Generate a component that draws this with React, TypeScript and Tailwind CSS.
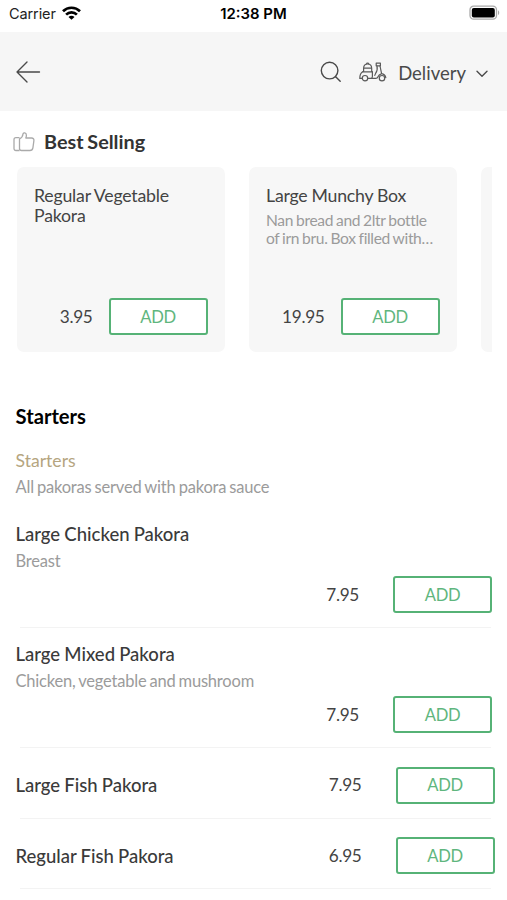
import React from 'react';

interface BestSeller {
  name: string;
  description?: string;
  price: string;
}

interface MenuItem {
  name: string;
  description?: string;
  price: string;
}

const bestSellers: BestSeller[] = [
  { name: 'Regular Vegetable Pakora', price: '3.95' },
  { name: 'Large Munchy Box', description: 'Nan bread and 2ltr bottle of irn bru. Box filled with…', price: '19.95' },
];

const starters: MenuItem[] = [
  { name: 'Large Chicken Pakora', description: 'Breast', price: '7.95' },
  { name: 'Large Mixed Pakora', description: 'Chicken, vegetable and mushroom', price: '7.95' },
  { name: 'Large Fish Pakora', price: '7.95' },
  { name: 'Regular Fish Pakora', price: '6.95' },
];

function AddButton() {
  return (
    <button
      type="button"
      className="h-[37px] w-[99px] shrink-0 rounded-[3px] border-2 border-[#56b276] bg-white pt-px text-[16.6px] leading-none tracking-[-0.4px] text-[#5fb67e]"
    >
      ADD
    </button>
  );
}

function StatusBar() {
  return (
    <div className="grid h-8 grid-cols-3 items-start px-[9px] pt-[4px] font-['Inter','Liberation_Sans',sans-serif] text-[14.5px] leading-5 text-[#222]">
      <div className="flex items-center gap-[6px]">
        <span className="tracking-[-0.1px]">Carrier</span>
        <svg className="-mt-[2px]" width="19" height="14" viewBox="0 0 19 14" fill="none" stroke="#000" strokeWidth="2.7">
          <path d="M1 5.2C5.7.6 13.3.6 18 5.2" />
          <path d="M4.1 8.6c3-2.9 7.8-2.9 10.8 0" />
          <path d="M9.5 13.8 6.5 10.9c1.7-1.4 4.3-1.4 6 0z" fill="#000" stroke="none" />
        </svg>
      </div>
      <span className="text-center text-[14.9px] font-semibold whitespace-nowrap text-black">12:38 PM</span>
      <svg className="mt-[1px] mr-[-2px] justify-self-end" width="31" height="16" viewBox="0 0 31 16" fill="none">
        <rect x="1" y="1.2" width="26.5" height="13" rx="3.6" stroke="#aaa" strokeWidth="1.3" />
        <rect x="2.8" y="3" width="23" height="9.4" rx="2" fill="#000" />
        <path d="M29 5.3c1.6.7 1.6 4.1 0 4.8z" fill="#aaa" />
      </svg>
    </div>
  );
}

function ScooterIcon() {
  return (
    <svg width="28" height="20" viewBox="0 0 28 20" fill="none" stroke="#5a5a5a" strokeWidth="1.2" strokeLinecap="round" strokeLinejoin="round">
      <path d="M4.6 9.4V6.4C4.6 3.8 6.2 2 8.6 2s4.1 1.8 4.1 4.4v3" />
      <path d="M7.6 1.8c0-1 2-1 2 0" />
      <path d="M5 6.2h7.4M3.6 9.8h9.8" />
      <path d="M3.6 9.8C1.6 11 .8 13.2.8 16.4h2.4M13.4 9.8v4.4c0 1.2-.4 2.2-1.2 2.2" />
      <circle cx="6" cy="16.2" r="2.7" />
      <path d="M8.8 16.4h8c1.2 0 1.8-.6 2.2-1.6.6-1.6 1.6-2.6 3.2-3" />
      <path d="M17.2 1.2h4.2v2.6h-4.2z" />
      <path d="M18 4c.6 2.8.4 5-1.4 7.4l-.8 2M21 4l1.6 7.6c2.4.4 3.8 1.8 4.2 4" />
      <circle cx="23" cy="16.2" r="2.7" />
    </svg>
  );
}

function Header() {
  return (
    <header className="flex h-[79px] items-center bg-[#f6f6f6] pt-px pr-[19px] pl-4 text-[#4a4a4a]">
      <svg width="25" height="22" viewBox="0 0 25 22" fill="none" stroke="#4a4a4a" strokeWidth="1.35" strokeLinecap="round" strokeLinejoin="round">
        <path d="M23.5 11H1M11 1 1 11l10 10" />
      </svg>
      <svg className="ml-auto" width="22" height="22" viewBox="0 0 22 22" fill="none" stroke="#4a4a4a" strokeWidth="1.4" strokeLinecap="round">
        <circle cx="9.6" cy="9.6" r="8.3" />
        <path d="m15.7 15.7 4.5 4.5" />
      </svg>
      <div className="ml-[17px] flex items-center">
        <ScooterIcon />
        <span className="ml-[11px] pt-px text-[18.5px] leading-6">Delivery</span>
        <svg className="mt-1 ml-[10px]" width="12" height="8" viewBox="0 0 12 8" fill="none" stroke="#4a4a4a" strokeWidth="1.4" strokeLinecap="round" strokeLinejoin="round">
          <path d="m1 1.2 5 5 5-5" />
        </svg>
      </div>
    </header>
  );
}

function BestSellerCard({ name, description, price }: BestSeller) {
  return (
    <div className="flex h-[185px] w-[207.5px] shrink-0 flex-col rounded-[7px] bg-[#f7f7f7] p-[17px]">
      <h3 className="mt-[2px] text-[17.7px] leading-5 tracking-[-0.2px] [word-spacing:-0.4px] text-[#444]">{name}</h3>
      {description && (
        <p className="mt-[5px] text-[15.6px] leading-[18px] tracking-[-0.35px] [word-spacing:-0.7px] text-[#9b9b9b]">
          {description}
        </p>
      )}
      <div className="mt-auto flex items-center justify-end gap-4">
        <span className="text-[17.2px] tracking-[-0.3px] text-[#444]">{price}</span>
        <AddButton />
      </div>
    </div>
  );
}

function MenuRow({ name, description, price }: MenuItem) {
  if (!description) {
    return (
      <li className="relative flex h-[70.5px] items-center pt-[4px] pr-[12.5px] pl-[15.5px] after:absolute after:right-4 after:bottom-0 after:left-5 after:h-px after:bg-[#f3f3f3]">
        <h3 className="mt-[2px] text-[18.5px] font-medium [word-spacing:-0.5px] text-[#3a3a3a]">{name}</h3>
        <span className="mr-[34px] ml-auto text-[17.2px] tracking-[-0.3px] text-[#444]">{price}</span>
        <AddButton />
      </li>
    );
  }

  return (
    <li className="relative flex h-[120px] flex-col pt-[14px] pr-[15px] pl-[15.5px] after:absolute after:right-4 after:bottom-0 after:left-5 after:h-px after:bg-[#f3f3f3]">
      <h3 className="text-[18.5px] leading-6 font-medium [word-spacing:-0.5px] text-[#3a3a3a]">{name}</h3>
      <p className="mt-[5px] text-[16.5px] leading-5 tracking-[-0.2px] [word-spacing:-1px] text-[#9b9b9b]">{description}</p>
      <div className="mt-[5px] flex items-center justify-end gap-[34px]">
        <span className="text-[17.2px] tracking-[-0.3px] text-[#444]">{price}</span>
        <AddButton />
      </div>
    </li>
  );
}

export default function App() {
  return (
    <div className="h-[900px] w-full overflow-hidden bg-white font-['Lato','Liberation_Sans',sans-serif]">
      <StatusBar />
      <Header />

      <section className="pt-[19px]">
        <div className="flex h-6 items-center pl-[13px]">
          <svg width="22" height="20" viewBox="0 0 22 20" fill="none" stroke="#aaa" strokeWidth="1.3" strokeLinejoin="round">
            <path d="M6.5 18.5H3c-1.2 0-2-.8-2-2V7.6c0-1.2.8-2 2-2h3.5" />
            <path d="M6.5 6.8C8.8 5.8 9.8 4.2 10 2c.2-1.8 3.4-1.3 3.4 1.2 0 1-.2 1.9-.6 2.8h5.8c1.6 0 2.5 1 2.3 2.6l-1 7.2c-.3 1.8-1.3 2.7-3 2.7H8.5c-1.3 0-2-.8-2-2z" />
          </svg>
          <h2 className="ml-[9px] text-[19.8px] font-bold [word-spacing:-1px] text-[#333]">Best Selling</h2>
        </div>
        <div className="mt-[13px] mr-[15px] ml-[17px] flex gap-[24.5px] overflow-hidden">
          {bestSellers.map((item) => (
            <BestSellerCard key={item.name} {...item} />
          ))}
          <div className="h-[185px] w-[208px] shrink-0 rounded-[7px] bg-[#f7f7f7]" />
        </div>
      </section>

      <section className="pt-[52px]">
        <div className="flex flex-col px-[15.5px]">
          <h2 className="text-[20.2px] leading-6 font-bold text-black">Starters</h2>
          <h3 className="mt-[21px] text-[17.6px] leading-6 text-[#b5a580]">Starters</h3>
          <p className="mt-1 text-[16.5px] leading-5 tracking-[-0.2px] [word-spacing:-0.9px] text-[#9b9b9b]">
            All pakoras served with pakora sauce
          </p>
        </div>
        <ul className="mt-[11px]">
          {starters.map((item) => (
            <MenuRow key={item.name} {...item} />
          ))}
        </ul>
      </section>
    </div>
  );
}
